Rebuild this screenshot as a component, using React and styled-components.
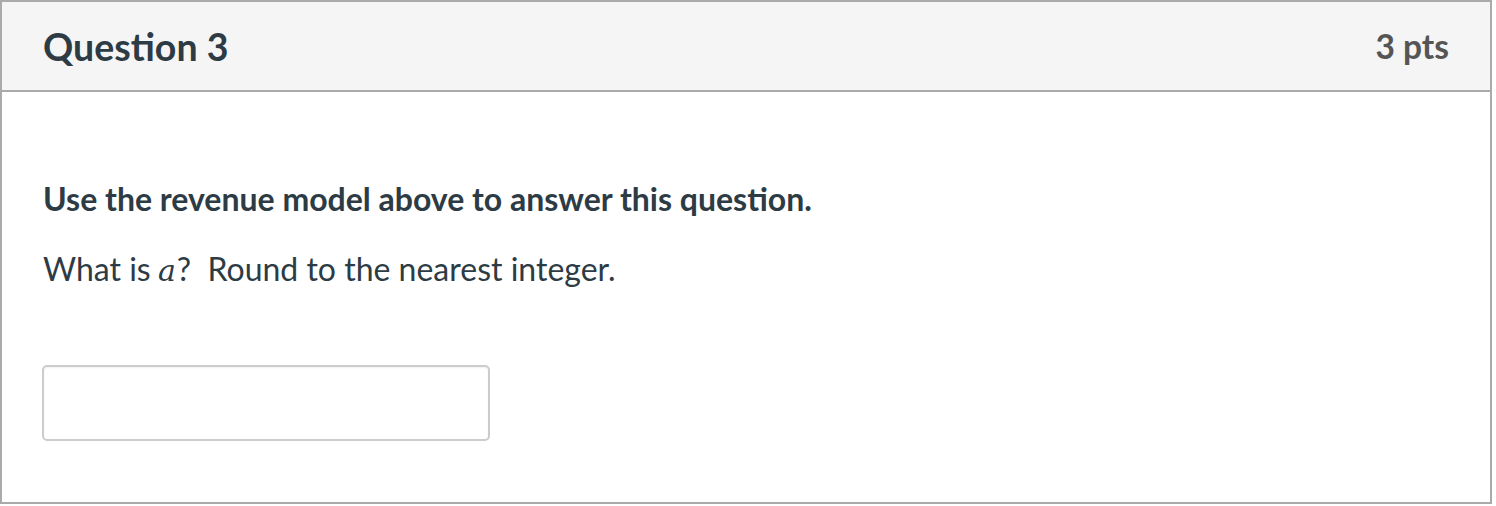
import React from "react";
import styled, { createGlobalStyle } from "styled-components";

const Global = createGlobalStyle`
  html, body { margin: 0; padding: 0; background: #fff; }
  body { font-family: Lato, "Noto Sans", sans-serif; color: #2d3b45; }
`;

const Card = styled.section`
  width: 1492px;
  height: 504px;
  box-sizing: border-box;
  border: 2px solid #aaaaaa;
  display: flex;
  flex-direction: column;
`;

const Header = styled.header`
  height: 88px;
  box-sizing: content-box;
  background: #f5f5f5;
  border-bottom: 2px solid #aaaaaa;
  display: flex;
  align-items: center;
  justify-content: space-between;
  padding: 0 41px 0 41px;
`;

const Title = styled.h2`
  margin: 0;
  font-size: 37.5px;
  font-weight: 700;
  color: #2d3b45;
`;

const Points = styled.div`
  font-size: 33.5px;
  font-weight: 700;
  color: #555555;
`;

const Body = styled.div`
  flex: 1;
  padding: 83px 41px 0 40px;
  display: flex;
  flex-direction: column;
`;

const Lead = styled.p`
  margin: 0 0 0 1px;
  font-size: 32px;
  font-weight: 700;
  line-height: 48px;
  color: #2d3b45;
`;

const Prompt = styled.p`
  margin: 22px 0 0 1px;
  font-size: 32px;
  font-weight: 400;
  line-height: 48px;
  height: 48px;
  color: #2d3b45;
`;

const MathVar = styled.span`
  font-family: "DejaVu Serif", serif;
  font-style: italic;
  font-size: 30px;
  line-height: 1;
  margin-left: -1px;
  margin-right: 1px;
`;

const Answer = styled.input`
  margin-top: 72px;
  width: 448px;
  height: 76px;
  box-sizing: border-box;
  border: 2px solid #cccccc;
  border-radius: 5px;
  background: #fff;
  box-shadow: inset 0 1px 2px rgba(0, 0, 0, 0.06);
  font-family: Lato, sans-serif;
  font-size: 28px;
  padding: 0 12px;
  outline: none;
`;

export default function App() {
  return (
    <>
      <Global />
      <Card>
        <Header>
          <Title>Question 3</Title>
          <Points>3 pts</Points>
        </Header>
        <Body>
          <Lead>Use the revenue model above to answer this question.</Lead>
          <Prompt>
            What is <MathVar>a</MathVar>?&nbsp; Round to the nearest integer.
          </Prompt>
          <Answer type="text" aria-label="Answer" />
        </Body>
      </Card>
    </>
  );
}
